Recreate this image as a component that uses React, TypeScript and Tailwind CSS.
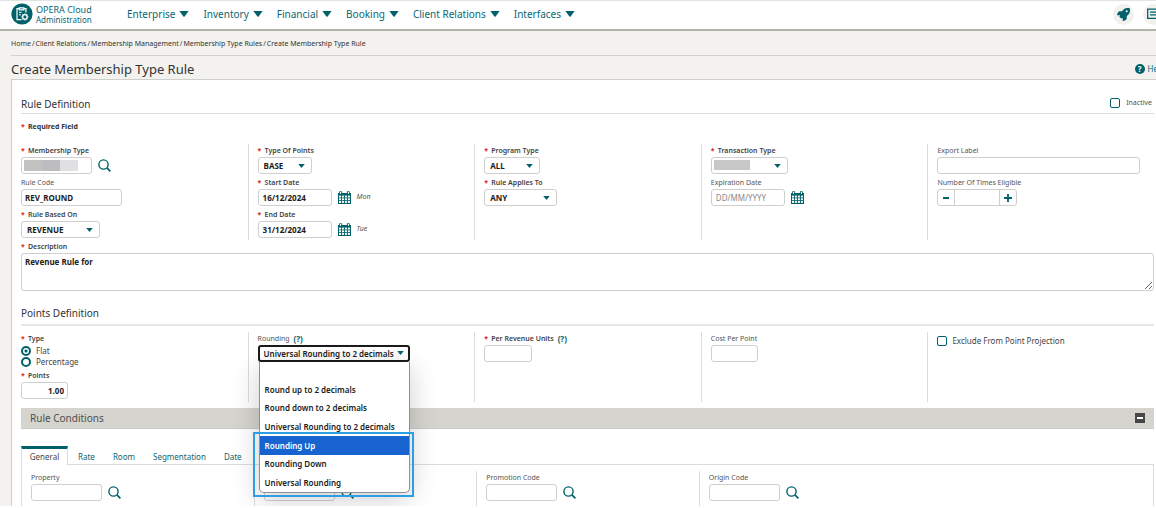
import { useState, type ReactNode } from "react";
import { FaRocket } from "react-icons/fa";

const inputBase =
  "h-[17px] rounded-[3px] border border-[#cfcfcf] bg-white text-[8px] leading-[15px] font-bold text-[#1b1b1b] outline-none";

function Label({ htmlFor, required, children }: { htmlFor?: string; required?: boolean; children: ReactNode }) {
  return (
    <label
      htmlFor={htmlFor}
      className={
        required
          ? "flex h-[13px] items-center pt-px text-[7px] leading-[12px] font-semibold whitespace-nowrap text-[#3f3f3f]"
          : "flex h-[13px] items-center pt-px text-[7px] leading-[12px] whitespace-nowrap text-[#555555]"
      }
    >
      {required && <Star />}
      {children}
    </label>
  );
}

function Star() {
  return <span className="w-[7px] shrink-0 font-bold text-[#e01b1b]">*</span>;
}

function Triangle({ className }: { className: string }) {
  return (
    <svg viewBox="0 0 10 6" preserveAspectRatio="none" className={className} aria-hidden="true">
      <path d="M0.4 0h9.2L5.6 5.4q-.6.7-1.2 0z" fill="#00616b" />
    </svg>
  );
}

function SearchIcon() {
  return (
    <svg viewBox="0 0 13 13" className="size-[13px]" fill="none" stroke="#00616b" strokeWidth="1.4" aria-hidden="true">
      <circle cx="5.5" cy="5.5" r="4.6" />
      <path d="M8.9 8.9 12.4 12.4" strokeWidth="1.7" />
    </svg>
  );
}

function CalendarIcon() {
  return (
    <svg viewBox="0 0 13 13" className="size-[13px]" aria-hidden="true">
      <path d="M0 2h13v11H0z" fill="#00616b" />
      <path d="M1.6 2.4V1.2a1 1 0 0 1 2 0v1.2M9.4 2.4V1.2a1 1 0 0 1 2 0v1.2" fill="none" stroke="#00616b" strokeWidth="1" />
      <path d="M2.2 1.4h.8v1.6h-.8zM10 1.4h.8v1.6H10z" fill="#fff" />
      <g fill="#fff">
        {[4.6, 7.3, 10].map((y) =>
          [1, 3.9, 6.9, 9.9].map((x) => <rect key={`${x}-${y}`} x={x} y={y} width="2" height="1.9" />),
        )}
      </g>
    </svg>
  );
}

function LogoIcon() {
  return (
    <svg viewBox="0 0 22 22" className="size-[22px] shrink-0" aria-hidden="true">
      <circle cx="11" cy="11" r="10.6" fill="#00616b" />
      <g fill="none" stroke="#fff" strokeWidth="1.2">
        <path d="M10.5 16.6H6V5.6h2.2M12.8 5.6H15v4" />
        <path d="M8.3 4.8h4.6v2H8.3z" />
        <path d="M8 9.4h2.6M8 11.8h2" strokeWidth="1" />
        <circle cx="13.9" cy="13.9" r="2.2" />
      </g>
      <g stroke="#fff" strokeWidth="1.2">
        <path d="M13.9 10.4v1.2M13.9 16.2v1.2M10.4 13.9h1.2M16.2 13.9h1.2M11.4 11.4l.9.9M15.5 15.5l.9.9M11.4 16.4l.9-.9M15.5 12.3l.9-.9" />
      </g>
    </svg>
  );
}

function Dropdown({
  id,
  label,
  value,
  width,
  covered,
}: {
  id: string;
  label: string;
  value: string;
  width: string;
  covered?: boolean;
}) {
  return (
    <div>
      <Label htmlFor={id} required>
        {label}
      </Label>
      <div className={`relative ${width}`}>
        <select id={id} className={`${inputBase} block w-full appearance-none pl-[5px]`}>
          <option>{value}</option>
        </select>
        {covered && <span className="absolute top-[3px] left-[3px] h-[10px] w-[36px] bg-[#c8c8c8]" />}
        <Triangle className="pointer-events-none absolute top-[7px] right-[7px] h-[4px] w-[7px]" />
      </div>
    </div>
  );
}

function DateField({
  id,
  label,
  value,
  day,
  required,
}: {
  id: string;
  label: string;
  value?: string;
  day?: string;
  required?: boolean;
}) {
  return (
    <div>
      <Label htmlFor={id} required={required}>
        {label}
      </Label>
      <div className="flex items-center gap-[6px]">
        <input
          id={id}
          defaultValue={value}
          placeholder="DD/MM/YYYY"
          className={`${inputBase} w-[74px] pl-[4px] placeholder:font-normal placeholder:text-[#8a8a8a]`}
        />
        <button type="button" aria-label={`Choose ${label}`}>
          <CalendarIcon />
        </button>
        {day && <span className="text-[7px] text-[#555555] italic">{day}</span>}
      </div>
    </div>
  );
}

function LookupField({
  id,
  label,
  required,
  covered,
}: {
  id: string;
  label?: string;
  required?: boolean;
  covered?: boolean;
}) {
  return (
    <div>
      <Label htmlFor={id} required={required}>
        {label}
      </Label>
      <div className="flex items-center gap-[6px]">
        <div className="relative w-[71px]">
          <input id={id} aria-label={label ?? "Code"} className={`${inputBase} block w-full px-[4px]`} />
          {covered && (
            <span className="absolute top-[3px] left-[3px] flex h-[11px]">
              <span className="w-[18px] bg-[#c3c2c1]" />
              <span className="w-[18px] bg-[#bdbdc0]" />
              <span className="w-[18px] bg-[#e0e0e2]" />
            </span>
          )}
        </div>
        <button type="button" aria-label={`Search ${label ?? "code"}`}>
          <SearchIcon />
        </button>
      </div>
    </div>
  );
}

const column = "flex flex-col gap-[2px] border-l border-[#dcdcdc] pl-[9px]";
const firstColumn = "flex flex-col gap-[2px]";
const checkbox = "size-[10px] shrink-0 appearance-none rounded-[2px] border border-[#00616b] bg-white";
const radio =
  "size-[10px] shrink-0 appearance-none rounded-full border-2 border-[#00616b] bg-white checked:bg-[radial-gradient(circle,#00616b_0_1px,#fff_2px)]";

const roundingOptions = [
  "",
  "Round up to 2 decimals",
  "Round down to 2 decimals",
  "Universal Rounding to 2 decimals",
  "Rounding Up",
  "Rounding Down",
  "Universal Rounding",
];

function RoundingField() {
  const [value, setValue] = useState("Universal Rounding to 2 decimals");
  return (
    <div>
      <div className="flex items-center gap-[4px]">
        <Label htmlFor="rounding">Rounding</Label>
        <button type="button" aria-label="About rounding" className="text-[8px] leading-[13px] font-bold text-[#00616b]">
          (?)
        </button>
      </div>
      <div className="relative w-[152px]">
        <select
          id="rounding"
          value={value}
          onChange={(e) => setValue(e.target.value)}
          className="block h-[17px] w-full appearance-none rounded-[3px] border-2 border-[#1b1b1b] bg-white pl-[4px] text-[8px] leading-[13px] font-semibold text-[#1b1b1b] outline-none"
        >
          {roundingOptions.map((o) => (
            <option key={o}>{o}</option>
          ))}
        </select>
        <Triangle className="pointer-events-none absolute top-[6px] right-[6px] h-[4px] w-[7px]" />
        <ul
          role="listbox"
          aria-label="Rounding options"
          className="absolute top-full right-0 left-[1px] z-10 grid h-[131px] grid-rows-7 overflow-hidden rounded-b-[5px] border border-t-0 border-[#8f8f8f] bg-white text-[8px] font-semibold text-[#1b1b1b] shadow-[0_6px_28px_rgba(0,0,0,0.2)]"
        >
          {roundingOptions.map((o) => (
            <li
              key={o}
              role="option"
              aria-selected={o === "Rounding Up"}
              onClick={() => setValue(o)}
              className={
                o === "Rounding Up"
                  ? "flex items-center bg-[#1763d0] pl-[5px] whitespace-nowrap text-white"
                  : "flex items-center pl-[5px] whitespace-nowrap"
              }
            >
              {o}
            </li>
          ))}
        </ul>
        <span className="pointer-events-none absolute top-[87px] -right-[4px] -left-[5px] z-20 h-[65px] border-2 border-[#2a9fe3]" />
      </div>
    </div>
  );
}

export default function App() {
  const nav = ["Enterprise", "Inventory", "Financial", "Booking", "Client Relations", "Interfaces"];
  const crumbs = ["Home", "Client Relations", "Membership Management", "Membership Type Rules"];
  return (
    <div className="overflow-hidden bg-[#f4f2ee] font-['Noto_Sans','Open_Sans',sans-serif] text-[#333333]">
      <header className="flex h-[31px] items-center border-t border-b-2 border-t-[#e2e2e2] border-b-[#b1b5ab] bg-white pb-[2px] pl-[11px]">
        <a href="#" className="flex w-[116px] shrink-0 items-center gap-[3px] text-[#0b6773]">
          <LogoIcon />
          <span className="flex flex-col">
            <span className="text-[9px] leading-[10px] whitespace-nowrap">OPERA Cloud</span>
            <span className="text-[8px] leading-[9px]">Administration</span>
          </span>
        </a>
        <nav className="flex gap-[14px]">
          {nav.map((n) => (
            <button
              key={n}
              type="button"
              className="flex items-center gap-[4px] text-[10px] leading-[14px] whitespace-nowrap text-[#0b6773]"
            >
              {n}
              <Triangle className="h-[6px] w-[10px]" />
            </button>
          ))}
        </nav>
        <div className="-mr-[8px] ml-auto flex shrink-0 gap-[9px]">
          <button
            type="button"
            aria-label="Quick launch"
            className="flex size-[21px] items-center justify-center rounded-full bg-[#f3f1ed]"
          >
            <FaRocket className="size-[13px] text-[#00616b]" />
          </button>
          <button
            type="button"
            aria-label="Messages"
            className="flex size-[21px] items-center justify-center rounded-full bg-[#f3f1ed]"
          >
            <svg viewBox="0 0 13 13" className="size-[13px]" fill="none" stroke="#00616b" strokeWidth="1.3" aria-hidden="true">
              <path d="M0.7 1.2h11.6v9.2H0.7zM3 4.2h7M3 6.9h7" />
            </svg>
          </button>
        </div>
      </header>

      <div className="pl-[11px]">
        <nav className="flex h-[25px] items-center gap-[1px] border-b border-[#d2d2cf] pt-[3px] text-[7px] whitespace-nowrap text-[#333333]">
          {crumbs.map((c) => (
            <span key={c} className="flex gap-[1px]">
              <a href="#">{c}</a>
              <span>/</span>
            </span>
          ))}
          <span>Create Membership Type Rule</span>
        </nav>
        <div className="flex h-[23px] items-center justify-between pt-[2px]">
          <h1 className="text-[13px] leading-[18px]">Create Membership Type Rule</h1>
          <a href="#" className="-mr-[9px] flex items-center gap-[3px] text-[8px] text-[#0b6773]">
            <span className="flex size-[10px] items-center justify-center rounded-full bg-[#00616b] text-[8px] leading-none font-bold text-white">
              ?
            </span>
            Help
          </a>
        </div>

        <main className="border-t border-l border-[#cfcfcc] bg-white pt-[17px] pr-[2px] pl-[9px]">
          <div className="flex h-[17px] items-start justify-between border-b border-[#dcdcdc]">
            <h2 className="text-[10px] leading-[14px]">Rule Definition</h2>
            <label className="flex items-center gap-[6px] pr-[2px] text-[7px] leading-[12px] text-[#555555]">
              <input type="checkbox" className={checkbox} />
              Inactive
            </label>
          </div>
          <p className="flex h-[30px] pt-[6px] text-[7px] leading-[13px] font-bold text-[#333333]">
            <Star />
            Required Field
          </p>

          <div className="grid min-h-[96px] grid-cols-5">
            <div className={firstColumn}>
              <LookupField id="membership-type" label="Membership Type" required covered />
              <div>
                <Label htmlFor="rule-code">Rule Code</Label>
                <input id="rule-code" defaultValue="REV_ROUND" className={`${inputBase} block w-[101px] pl-[3px]`} />
              </div>
              <Dropdown id="based-on" label="Rule Based On" value="REVENUE" width="w-[79px]" />
            </div>
            <div className={column}>
              <Dropdown id="type-of-points" label="Type Of Points" value="BASE" width="w-[54px]" />
              <DateField id="start" label="Start Date" value="16/12/2024" day="Mon" required />
              <DateField id="end" label="End Date" value="31/12/2024" day="Tue" required />
            </div>
            <div className={column}>
              <Dropdown id="program-type" label="Program Type" value="ALL" width="w-[56px]" />
              <Dropdown id="applies-to" label="Rule Applies To" value="ANY" width="w-[73px]" />
            </div>
            <div className={column}>
              <Dropdown id="transaction-type" label="Transaction Type" value="" width="w-[77px]" covered />
              <DateField id="expiration" label="Expiration Date" />
            </div>
            <div className={column}>
              <div>
                <Label htmlFor="export-label">Export Label</Label>
                <div className="pr-[14px]">
                  <input id="export-label" className={`${inputBase} block w-full px-[4px]`} />
                </div>
              </div>
              <div>
                <Label htmlFor="times">Number Of Times Eligible</Label>
                <div className="flex h-[17px] w-[80px] overflow-hidden rounded-[3px] border border-[#cfcfcf]">
                  <button type="button" aria-label="Decrease" className="flex w-[16px] items-center justify-center">
                    <svg viewBox="0 0 8 8" className="size-[8px]" stroke="#00616b" strokeWidth="1.8">
                      <path d="M1 4h6" />
                    </svg>
                  </button>
                  <input id="times" className="min-w-0 flex-1 border-x border-[#cfcfcf] text-[8px] outline-none" />
                  <button type="button" aria-label="Increase" className="flex w-[16px] items-center justify-center">
                    <svg viewBox="0 0 8 8" className="size-[8px]" stroke="#00616b" strokeWidth="1.8">
                      <path d="M0 4h8M4 0v8" />
                    </svg>
                  </button>
                </div>
              </div>
            </div>
          </div>

          <div>
            <Label htmlFor="description" required>
              Description
            </Label>
            <textarea
              id="description"
              defaultValue="Revenue Rule for"
              className="block h-[38px] w-full rounded-[3px] border border-[#cfcfcf] bg-white px-[3px] py-[2px] text-[8px] leading-[12px] font-bold text-[#1b1b1b] outline-none"
            />
          </div>

          <h2 className="mt-[15px] mb-[6px] h-[20px] border-b-2 border-[#e6e6e6] text-[10px] leading-[14px]">Points Definition</h2>

          <div className="grid h-[70px] grid-cols-5">
            <div className={firstColumn}>
              <fieldset className="text-[8px] leading-[11px] text-[#444444]">
                <legend>
                  <Label required>Type</Label>
                </legend>
                <label className="flex h-[11px] items-center gap-[5px]">
                  <input type="radio" name="type" defaultChecked className={radio} />
                  Flat
                </label>
                <label className="flex h-[11px] items-center gap-[5px]">
                  <input type="radio" name="type" className={radio} />
                  Percentage
                </label>
              </fieldset>
              <div>
                <Label htmlFor="points" required>
                  Points
                </Label>
                <input id="points" defaultValue="1.00" className={`${inputBase} block w-[47px] pr-[3px] text-right`} />
              </div>
            </div>
            <div className={column}>
              <RoundingField />
            </div>
            <div className={column}>
              <div>
                <div className="flex items-center gap-[4px]">
                  <Label htmlFor="per-revenue" required>
                    Per Revenue Units
                  </Label>
                  <button
                    type="button"
                    aria-label="About revenue units"
                    className="text-[8px] leading-[13px] font-bold text-[#00616b]"
                  >
                    (?)
                  </button>
                </div>
                <input id="per-revenue" className={`${inputBase} block w-[48px] px-[3px]`} />
              </div>
            </div>
            <div className={column}>
              <div>
                <Label htmlFor="cost">Cost Per Point</Label>
                <input id="cost" className={`${inputBase} block w-[47px] px-[3px]`} />
              </div>
            </div>
            <div className={column}>
              <label className="flex items-center gap-[5px] pt-[3px] text-[8px] leading-[12px] whitespace-nowrap text-[#444444]">
                <input type="checkbox" className={checkbox} />
                Exclude From Point Projection
              </label>
            </div>
          </div>

          <div className="mt-[6px] flex h-[21px] items-center justify-between border-b border-[#cbcac5] bg-[#d5d4cf] pr-[9px] pl-[9px]">
            <h2 className="text-[10px] leading-[14px] text-[#4f4f4f]">Rule Conditions</h2>
            <button
              type="button"
              aria-label="Collapse"
              className="flex size-[10px] items-center justify-center bg-[#474747]"
            >
              <span className="h-[2px] w-[6px] bg-white" />
            </button>
          </div>

          <div className="mt-[17px] flex h-[19px] text-[8px] text-[#0b6773]">
            <button
              type="button"
              className="w-[47px] border-t-3 border-r border-l border-t-[#00616b] border-r-[#dcdcdc] border-l-[#dcdcdc] text-[#444444]"
            >
              General
            </button>
            <div className="flex flex-1 gap-[18px] border-b border-[#dcdcdc] pt-[3px] pl-[10px]">
              {["Rate", "Room", "Segmentation", "Date"].map((t) => (
                <button key={t} type="button">
                  {t}
                </button>
              ))}
            </div>
          </div>
          <div className="border-x border-[#dcdcdc] px-[9px] pt-[6px]">
            <div className="grid h-[35px] grid-cols-5">
              <div className={firstColumn}>
                <LookupField id="property" label="Property" />
              </div>
              <div className={column}>
                <LookupField id="code" />
              </div>
              <div className={column}>
                <LookupField id="promotion" label="Promotion Code" />
              </div>
              <div className={column}>
                <LookupField id="origin" label="Origin Code" />
              </div>
            </div>
          </div>
        </main>
      </div>
    </div>
  );
}
